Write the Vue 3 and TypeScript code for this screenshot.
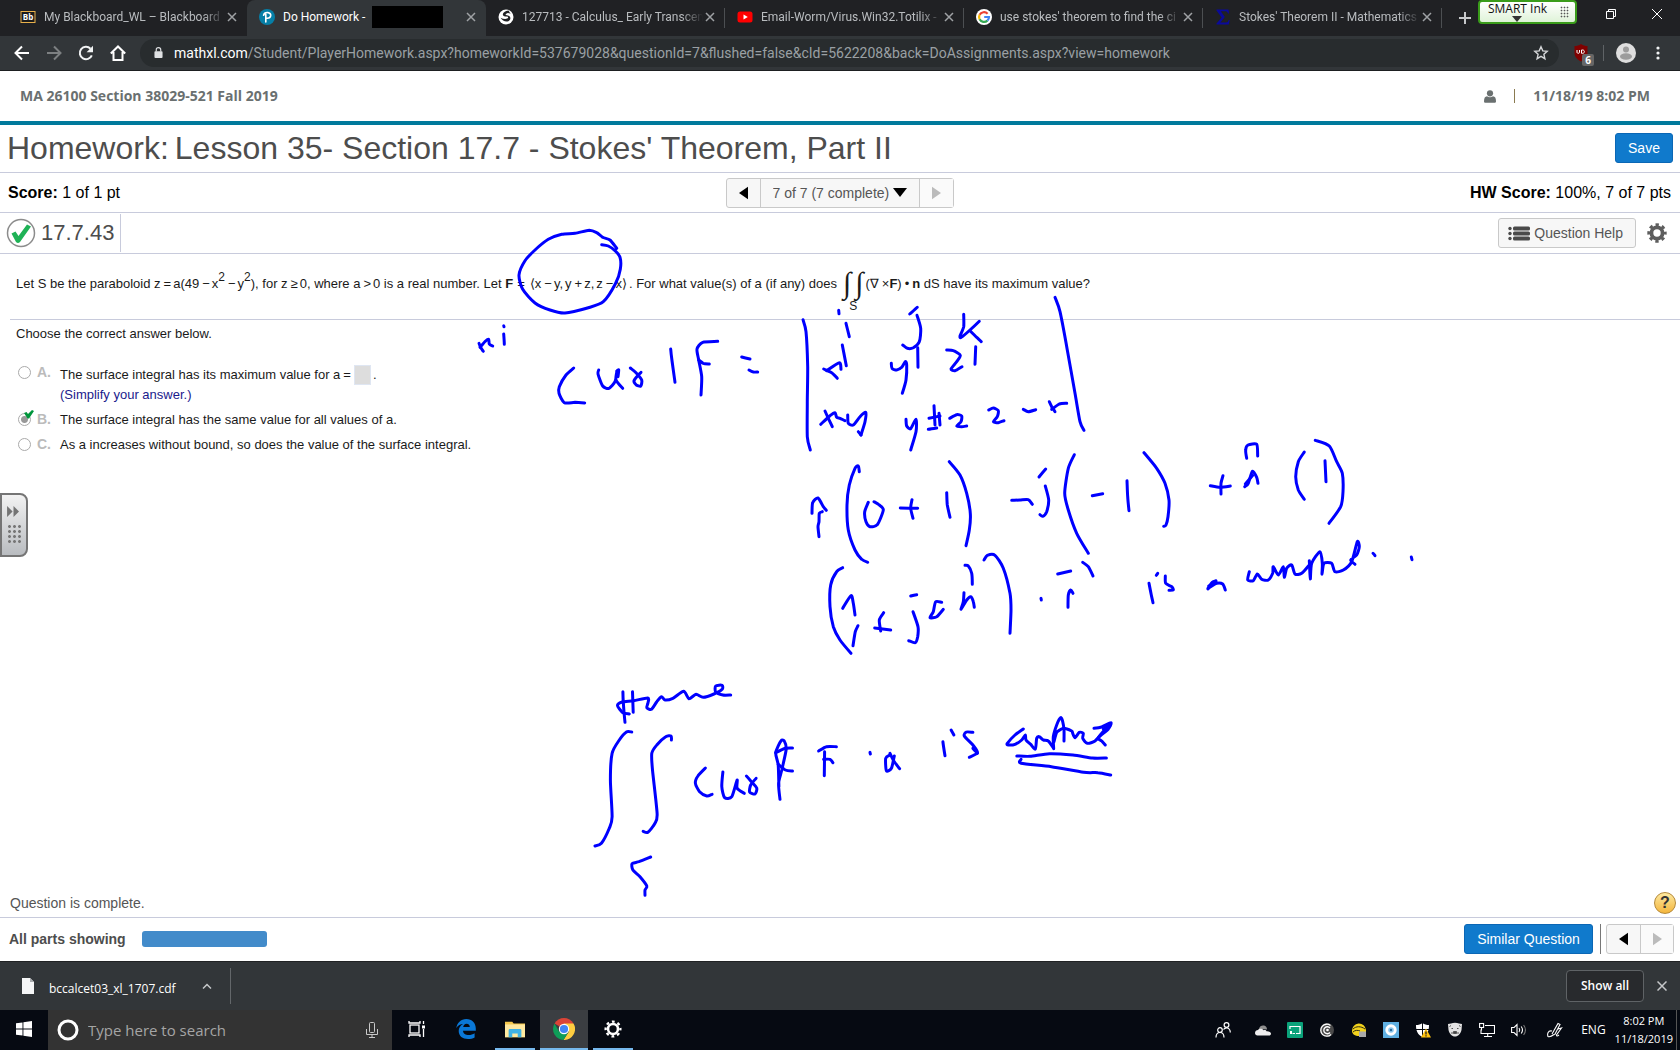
<script setup lang="ts">
import { ref } from 'vue'

interface Tab {
  title: string
  icon: 'bb' | 'pearson' | 'globe' | 'youtube' | 'google' | 'sigma'
  active?: boolean
}

const tabs: Tab[] = [
  { title: 'My Blackboard_WL – Blackboard', icon: 'bb' },
  { title: 'Do Homework - ', icon: 'pearson', active: true },
  { title: '127713 - Calculus_ Early Transcen', icon: 'globe' },
  { title: 'Email-Worm/Virus.Win32.Totilix -', icon: 'youtube' },
  { title: "use stokes' theorem to find the ci", icon: 'google' },
  { title: "Stokes' Theorem II - Mathematics", icon: 'sigma' },
]

const search = ref('')
const answer = ref('B')
const blank = ref('')

/* Pen strokes, grouped by the region of the page where they were made. */
interface InkGroup {
  x: number
  y: number
  sx: number
  sy: number
  strokes: string[]
}

const ink: InkGroup[] = [
  {
    x: 460, y: 210, sx: 3, sy: 3,
    strokes: [
      '425,104 445,108 465,122 480,142 481,178 466,222 430,275 385,293 315,309 270,300 225,279 188,238 177,195 195,152 225,120 265,88 305,73 345,70 388,61 410,68 428,82 450,90 470,115',
      '57,400 62,412 70,424', '60,412 76,394 86,388 88,402 98,408', '131,347 132,350', '131,372 133,403',
      '341,474 318,495 298,530 297,550 313,578 345,577 374,579',
      '416,480 414,492 428,528 447,535 465,515 471,483 468,510 488,535', '471,483 476,480 474,500',
      '511,474 528,488 545,510 542,528 528,524 522,512 535,495 543,487',
      '632,417 635,445 645,517',
      '773,394 728,397 711,417 716,450 725,500 723,555', '716,450 730,460 748,462',
      '845,441 870,447', '867,480 880,486 893,486',
    ],
  },
  {
    x: 780, y: 250, sx: 3, sy: 3,
    strokes: [
      '69,209 78,245 83,350 82,450 82,560 91,600',
      '825,142 840,185 862,300 885,430 900,515 912,541',
      '176,181 177,191', '198,220 208,260', '389,192 412,172', '411,196 422,235 418,275 400,293 382,295 368,285',
      '551,193 551,230 540,258 544,262 570,240 598,214', '570,242 590,262 604,275',
      '131,357 155,368 172,385', '140,362 178,338 183,358', '187,285 199,347',
      '334,340 336,355 350,360 365,352 376,335 380,345 378,390 367,430', '413,293 414,352',
      '500,300 520,302 541,316 530,335 513,357 525,362 546,350', '587,290 585,343',
      '135,483 145,505 157,530', '122,523 150,497 165,488 170,502 180,505 195,512',
      '203,495 205,520 220,525 240,500 257,487 255,515 243,555', '235,545 243,555',
      '378,508 380,528 392,536 408,508 408,545 392,600',
      '462,467 465,525', '447,505 480,498', '477,490 480,525', '445,538 470,534',
      '509,505 530,494 545,498 543,515 530,528 545,530 560,528',
      '626,480 640,474 655,482 652,500 640,515 655,518 672,512',
      '730,478 745,485 767,479', '808,455 815,470 825,485', '815,478 838,462 860,460',
    ],
  },
  {
    x: 790, y: 430, sx: 3, sy: 3,
    strokes: [
      '66,250 68,218 84,204 100,230 109,241', '97,245 88,250 87,275 84,290 87,320',
      '208,125 205,108 195,115 178,165 171,225 175,300 195,360 215,388 233,397',
      '235,217 224,245 228,275 240,290 262,284 280,240 268,225 252,215',
      '331,234 383,235', '366,209 362,235 369,265', '470,188 472,225 480,262',
      '478,95 510,135 530,190 541,250 538,300 528,347',
      '665,211 690,210 715,209 727,223', '747,141 767,117', '766,168 776,210 770,245 758,259 750,254',
      '853,74 835,115 824,190 835,240 860,310 895,370', '907,197 938,191',
      '158,413 140,425 122,465 120,530 130,590 150,630 183,670',
      '158,535 183,497 190,520 195,555', '204,587 196,605 189,647',
      '281,548 268,570 272,603', '254,594 302,600', '362,498 380,494', '369,545 384,590 383,620 376,638 356,632',
      '455,517 437,515 430,545 420,563 440,560 460,538',
      '525,406 535,408 545,430 547,463', '522,488 520,515 513,538 530,510 542,500 550,515 553,532',
      '582,390 592,376 615,376 640,415 660,490 663,540 660,610',
      '753,505 754,510', '803,432 842,423', '878,397 895,410 909,438', '834,532 835,495 842,480 849,490',
    ],
  },
  {
    x: 1120, y: 430, sx: 3, sy: 3,
    strokes: [
      '21,152 23,200 27,242', '72,68 110,115 135,160 147,210 144,260 138,285 131,289',
      '271,167 300,172 331,168', '309,137 303,160 303,192', '380,85 377,60 384,45 410,43 413,78',
      '374,170 385,160 397,124 410,142 414,160', '376,162 398,136', '553,66 535,95 527,140 535,180 553,208', '615,92 618,155',
      '586,31 628,48 650,95 667,130 669,185 662,230 627,280',
      '109,436 113,430', '87,460 94,495 99,518', '136,438 137,460 155,470 160,480 147,481',
      '264,477 275,458 288,452', '264,475 290,460 308,462 316,480', '266,468 288,456',
      '388,425 383,450 400,452 412,432 425,448 445,450 458,430 460,410 475,435 490,410 493,442 500,415 515,405 525,432 545,430 568,405',
      '568,392 571,447 575,400 600,365 607,400 606,433 612,400 635,400 645,425 670,420 695,395 712,335 718,350 710,375 692,390 705,403',
      '759,370 765,377', '874,381 876,389',
    ],
  },
  {
    x: 580, y: 670, sx: 2.8, sy: 3,
    strokes: [
      '120,65 122,110 126,157', '147,65 149,127',
      '138,132 120,128 105,107 118,96 150,92 190,84 190,100 187,113 200,118 215,95 228,80 238,90 260,85 290,64 305,86 325,73 345,82 375,72 398,58 398,46 380,48 380,66 400,75 422,75',
      '145,186 130,186 110,210 90,250 85,330 90,440 82,475 60,520 42,528',
      '256,210 255,198 240,200 215,225 201,250 203,300 216,430 210,460 190,487 177,484',
      '198,561 165,575 146,581 148,600 168,620 187,648 182,660 182,676',
      '351,294 330,318 323,340 335,365 355,378 370,373', '400,306 397,350 405,383 425,380 440,330 440,355 460,370',
      '466,318 480,335 495,355 490,372 475,366 478,345 493,325',
      '560,388 556,340 565,300 577,240 573,215 563,212 548,248 555,285 557,350', '548,248 575,235 595,234', '555,283 575,300 595,303',
      '684,317 685,245', '668,243 690,230 718,230', '682,268 700,268 708,278', '812,247 813,252',
      '868,255 856,265 858,302 872,295 880,258', '868,250 880,275 895,296',
      '1016,215 1022,257', '1039,180 1047,195', '1100,187 1082,186 1076,198 1100,225 1113,248 1090,262', '1100,235 1113,250',
      '1223,258 1260,259 1315,251 1380,255 1435,264 1474,264', '1235,268 1235,280 1320,290 1410,307 1450,308 1486,315',
    ],
  },
  {
    x: 1000, y: 705, sx: 3, sy: 3,
    strokes: [
      '70,72 45,90 22,115 25,120 45,118 65,105 76,90 78,105 92,118 106,132 110,100 118,95 130,105 145,108 160,128',
      '161,131 160,95 170,60 182,38 188,50 192,75 192,108',
      '165,85 190,70 215,78 218,85 225,98 238,82 250,85 248,100 262,115 285,108 305,85 330,55',
      '282,70 305,66 333,53 325,72 295,98 305,108 316,120',
      '310,72 330,62', '162,110 170,80',
    ],
  },
]

/* Curve through every sampled point; each control point leans towards its neighbours. */
function strokePath(g: InkGroup, stroke: string): string {
  const p = stroke.split(' ').map((pair) => {
    const [x, y] = pair.split(',').map(Number)
    return [g.x + x / g.sx, g.y + y / g.sy]
  })
  const r = (n: number) => Math.round(n * 10) / 10
  let d = `M${r(p[0][0])} ${r(p[0][1])}`
  for (let i = 0; i < p.length - 1; i++) {
    const a = p[Math.max(i - 1, 0)]
    const b = p[i]
    const c = p[i + 1]
    const e = p[Math.min(i + 2, p.length - 1)]
    d += `C${r(b[0] + (c[0] - a[0]) / 8)} ${r(b[1] + (c[1] - a[1]) / 8)} ${r(c[0] - (e[0] - b[0]) / 8)} ${r(c[1] - (e[1] - b[1]) / 8)} ${r(c[0])} ${r(c[1])}`
  }
  return d
}

const inkPaths: string[] = ink.flatMap((g) => g.strokes.map((s) => strokePath(g, s)))
</script>

<template>
  <div class="screen">
    <header class="tabstrip">
      <div v-for="t in tabs" :key="t.title" class="tab" :class="{ active: t.active }">
        <svg v-if="t.icon === 'bb'" class="fav" viewBox="0 0 16 16"><rect x="1" y="2.5" width="14" height="11" fill="#1b1b1b" stroke="#e8b04a" /><text x="8" y="11" text-anchor="middle" font-size="8" font-weight="700" fill="#fff" font-family="Open Sans, sans-serif">Bb</text></svg>
        <svg v-else-if="t.icon === 'pearson'" class="fav" viewBox="0 0 16 16"><circle cx="8" cy="8" r="8" fill="#067fa7" /><path d="M6.800 13V5.200M4.600 6.200C5 4.600 7 3.400 8.900 3.600c2 .2 3 1.500 2.800 3.100C11.400 8.500 9.500 9.500 7.200 9.200" fill="none" stroke="#fff" stroke-width="1.600" stroke-linecap="round" /></svg>
        <svg v-else-if="t.icon === 'globe'" class="fav" viewBox="0 0 16 16"><circle cx="8" cy="8" r="7.500" fill="#fff" /><path d="M10.500 1.500C7 2 5 3.500 4.800 5.500 4.700 7.500 7 7.500 9 7.600c1.500.1 1.600 1.400.2 2C7.500 10.300 5 10 2.500 8.800 4 11.500 7 12.800 9.500 12.400c2.500-.4 3.400-2.600 2.600-4.400C11.200 6.300 9 6.200 8 6 6.900 5.500 8.400 4.300 10 4c1 0 1.800.3 2.600 1Z" fill="#202124" /></svg>
        <svg v-else-if="t.icon === 'youtube'" class="fav" viewBox="0 0 16 16"><rect x=".5" y="2.500" width="15" height="11" rx="2.500" fill="#f00" /><path d="M6.500 5.500v5L10.800 8z" fill="#fff" /></svg>
        <svg v-else-if="t.icon === 'google'" class="fav" viewBox="0 0 16 16"><circle cx="8" cy="8" r="8" fill="#fff" /><g fill="none" stroke-width="2.200"><path d="M11.600 4.700A5 5 0 0 0 3.600 5.800" stroke="#ea4335" /><path d="M3.600 5.800a5 5 0 0 0 0 4.400" stroke="#fbbc05" /><path d="M3.600 10.200a5 5 0 0 0 7.800 1.400" stroke="#34a853" /><path d="M11.400 11.600A5 5 0 0 0 13 8H8.200" stroke="#4285f4" /></g></svg>
        <svg v-else class="fav" viewBox="0 0 16 16"><path d="M1.500.5h12l.5 4h-1C12.500 2.700 11.500 2.200 10 2.200H5.800L9.800 8 5.400 13.500h5.400c1.600 0 2.400-.8 2.900-2.500h1l-.9 4.500H1.500v-1L6.600 8.400 1.500 1.500z" fill="#0a0a9a" /></svg>
        <span class="tab-title">{{ t.title }}<i v-if="t.active" class="redacted"></i></span>
        <button class="tab-close" aria-label="Close tab"><svg viewBox="0 0 10 10"><path d="M1 1l8 8M9 1l-8 8" /></svg></button>
      </div>
      <button class="new-tab" aria-label="New tab"><svg viewBox="0 0 12 12"><path d="M6 0v12M0 6h12" /></svg></button>
      <div class="window-controls">
        <button aria-label="Restore"><svg viewBox="0 0 10 10"><path d="M.5 2.500h7v7h-7zM2.500 2.500v-2h7v7h-2" /></svg></button>
        <button aria-label="Close"><svg viewBox="0 0 10 10"><path d="M0 0l10 10M10 0L0 10" /></svg></button>
      </div>
      <button class="smart-ink"><span>SMART Ink</span><svg class="smart-arrow" viewBox="0 0 10 6"><path d="M0 0h10L5 6z" fill="#333" /></svg><i class="smart-dots"></i></button>
    </header>

    <nav class="toolbar">
      <button class="nav" aria-label="Back"><svg viewBox="0 0 16 16"><path d="M15 8H2M8 1.500L1.500 8 8 14.500" stroke="#fff" /></svg></button>
      <button class="nav" aria-label="Forward"><svg viewBox="0 0 16 16"><path d="M1 8h13M8 1.500L14.500 8 8 14.500" stroke="#7d8082" /></svg></button>
      <button class="nav" aria-label="Reload"><svg viewBox="0 0 16 16"><path d="M13.800 10.300A6.200 6.200 0 1 1 12.500 3.700" stroke="#f1f3f4" /><path d="M15 .8v6.400H8.600z" fill="#f1f3f4" /></svg></button>
      <button class="nav" aria-label="Home"><svg viewBox="0 0 16 16"><path d="M.8 8.500L8 1.500l7.200 7M3.500 7v8h9V7" stroke="#fff" /></svg></button>
      <div class="omnibox">
        <svg class="lock" viewBox="0 0 10 13"><rect x=".5" y="5" width="9" height="7.500" rx="1" fill="#dfe1e3" /><path d="M2.500 5.500V3.500a2.500 2.500 0 0 1 5 0v2" fill="none" stroke="#dfe1e3" stroke-width="1.300" /></svg>
        <div class="url"><b>mathxl.com</b>/Student/PlayerHomework.aspx?homeworkId=537679028&amp;questionId=7&amp;flushed=false&amp;cId=5622208&amp;back=DoAssignments.aspx?view=homework</div>
        <svg class="star" viewBox="0 0 16 16"><path d="M8 1.800l1.800 4.100 4.400.4-3.300 3 1 4.400L8 11.400l-3.900 2.300 1-4.400-3.300-3 4.400-.4z" fill="none" stroke="#d5d7d9" stroke-width="1.400" /></svg>
      </div>
      <span class="ublock"><svg viewBox="0 0 16 18"><path d="M8 0c2 1.500 4 2 6.500 2v7c0 4-3 6.500-6.500 8.500C4.500 15.500 1.500 13 1.500 9V2C4 2 6 1.500 8 0z" fill="#800000" /><path d="M4 6v2.500c0 1 2.500 1 2.500 0V6M8.500 9.300V6h1.200c2.200 0 2.200 3.300 0 3.300z" fill="none" stroke="#fff" /></svg><b>6</b></span>
      <i class="tool-sep"></i>
      <svg class="avatar" viewBox="0 0 20 20"><circle cx="10" cy="10" r="10" fill="#dedede" /><circle cx="10" cy="6.500" r="3" fill="#9c9c9c" /><ellipse cx="10" cy="13.500" rx="6" ry="3.200" fill="#9c9c9c" /></svg>
      <svg class="kebab" viewBox="0 0 4 16"><circle cx="2" cy="3" r="1.600" /><circle cx="2" cy="8" r="1.600" /><circle cx="2" cy="13" r="1.600" /></svg>
    </nav>

    <main class="page">
      <div class="course">
        <strong>MA 26100 Section 38029-521 Fall 2019</strong>
        <div class="course-right">
          <svg class="user" viewBox="0 0 12 13"><circle cx="6" cy="3.300" r="3.100" /><path d="M0 11.500C0 8 1 6.500 3 6.300c2 1.300 4 1.300 6 0 2 .2 3 1.700 3 5.200 0 .8-.7 1.300-1.500 1.300h-9C.7 12.800 0 12.300 0 11.500z" /></svg>
          <i class="course-sep"></i>
          <strong>11/18/19 8:02 PM</strong>
        </div>
      </div>

      <div class="title-row">
        <h1><span>Homework:</span><span>Lesson 35- Section 17.7 - Stokes' Theorem, Part II</span></h1>
        <button class="primary save">Save</button>
      </div>

      <div class="score-row">
        <span><b>Score:</b> 1 of 1 pt</span>
        <div class="pager">
          <button aria-label="Previous question"><svg viewBox="0 0 10 14"><path d="M10 0v14L0 7z" /></svg></button>
          <label class="picker">
            <select aria-label="Question"><option>7 of 7 (7 complete)</option></select>
            <svg viewBox="0 0 14 9"><path d="M0 0h14L7 9z" /></svg>
          </label>
          <button disabled aria-label="Next question"><svg viewBox="0 0 10 14"><path d="M0 0v14l10-7z" /></svg></button>
        </div>
        <span class="hw"><b>HW Score:</b> 100%, 7 of 7 pts</span>
      </div>

      <div class="number-row">
        <div class="number">
          <svg viewBox="0 0 30 30"><circle cx="15" cy="15" r="13.500" fill="#fff" stroke="#8c8c8c" stroke-width="1.500" /><path d="M5.500 15.500l4-2 3 4.500L21 6.500l4 2L14 24q-2 2-4 0z" fill="#1fb256" /></svg>
          <span>17.7.43</span>
        </div>
        <button class="help-btn"><svg viewBox="0 0 22 15"><g fill="#4a4a4a"><circle cx="2" cy="2.500" r="1.700" /><circle cx="2" cy="7.500" r="1.700" /><circle cx="2" cy="12.500" r="1.700" /><rect x="5" y=".5" width="17" height="4" rx="1.500" /><rect x="5" y="5.500" width="17" height="4" rx="1.500" /><rect x="5" y="10.500" width="17" height="4" rx="1.500" /></g></svg>Question Help</button>
        <button class="gear" aria-label="Settings"><svg viewBox="0 0 20 20"><circle cx="10" cy="10" r="5.600" fill="none" stroke="#5e5e5e" stroke-width="3.800" /><circle cx="10" cy="10" r="8.200" fill="none" stroke="#5e5e5e" stroke-width="3" stroke-dasharray="3.300 3.140" stroke-dashoffset="1.700" /></svg></button>
      </div>

      <section class="work">
        <p class="question"><span>Let S be the paraboloid z<i>=</i>a(49<i>−</i>x<sup>2</sup><i>−</i>y<sup>2</sup>), for z<i>≥</i>0, where a<i>&gt;</i>0 is a real number. Let <b>F</b><i class="wide">=</i>⟨x<i>−</i>y,<u>y</u><i>+</i>z,<u>z</u><i>−</i>x⟩<u>.</u> For what value(s) of a (if any) does</span><span class="integral"><span class="signs"><em>∫</em><em>∫</em></span><small>S</small></span><span>(∇<i class="cross">×</i><b>F</b>)<i class="dot">•</i><b>n</b> dS have its maximum value?</span></p>

        <div class="answers">
          <p>Choose the correct answer below.</p>
          <div class="option first">
            <input id="opt-a" v-model="answer" type="radio" name="ans" value="A" disabled />
            <label for="opt-a"><b>A.</b></label>
            <div>
              <label class="line" for="blank">The surface integral has its maximum value for a<i>=</i><input id="blank" v-model="blank" class="blank" type="text" disabled />.</label>
              <div class="hint">(Simplify your answer.)</div>
            </div>
          </div>
          <div class="option">
            <span class="checked"><input id="opt-b" v-model="answer" type="radio" name="ans" value="B" disabled /><svg viewBox="0 0 10 9"><path d="M0 3l2.500-1L4 4 8 0l2 1-5 7.500H3.500z" fill="#00953b" /></svg></span>
            <label for="opt-b"><b>B.</b>The surface integral has the same value for all values of a.</label>
          </div>
          <div class="option">
            <input id="opt-c" v-model="answer" type="radio" name="ans" value="C" disabled />
            <label for="opt-c"><b>C.</b>As a increases without bound, so does the value of the surface integral.</label>
          </div>
        </div>
      </section>

      <div class="status">
        <span>Question is complete.</span>
        <button class="ball" aria-label="Help">?</button>
      </div>

      <footer class="footer">
        <span id="parts-label">All parts showing</span>
        <div class="parts" role="progressbar" aria-labelledby="parts-label" aria-valuenow="100"></div>
        <button class="primary similar">Similar Question</button>
        <i class="foot-sep"></i>
        <div class="pager">
          <button aria-label="Previous"><svg viewBox="0 0 10 14"><path d="M10 0v14L0 7z" /></svg></button>
          <button disabled aria-label="Next"><svg viewBox="0 0 10 14"><path d="M0 0v14l10-7z" /></svg></button>
        </div>
      </footer>
    </main>

    <div class="downloads">
      <svg class="file" viewBox="0 0 12 16"><path d="M0 0h8l4 4v12H0z" fill="#f5f6f7" /><path d="M8 0v4h4z" fill="#a9acaf" /></svg>
      <span class="file-name">bccalcet03_xl_1707.cdf</span>
      <button class="chev" aria-label="More"><svg viewBox="0 0 10 6"><path d="M1 5.500l4-4 4 4" /></svg></button>
      <i class="dl-sep"></i>
      <button class="show-all">Show all</button>
      <button class="dl-close" aria-label="Close"><svg viewBox="0 0 10 10"><path d="M.5.500l9 9M9.500.500l-9 9" /></svg></button>
    </div>

    <div class="taskbar">
      <button class="app" aria-label="Start"><svg class="i16" viewBox="0 0 16 16"><path d="M0 2.300L6.500 1.400v6H0zM7.400 1.300L16 0v7.400H7.400zM0 8.400h6.500v6.200L0 13.700zM7.400 8.400H16V16l-8.600-1.300z" fill="#fff" /></svg></button>
      <div class="search">
        <svg viewBox="0 0 22 22"><circle cx="11" cy="11" r="9" fill="none" stroke="#fff" stroke-width="3" /></svg>
        <input v-model="search" type="text" placeholder="Type here to search" aria-label="Search" />
        <svg class="mic" viewBox="0 0 12 16"><rect x="3.500" y=".5" width="5" height="10" rx="1" /><path d="M.5 7v5.500h11V7M6 12.500v3M3 15.500h6" /></svg>
      </div>
      <button class="app" aria-label="Task view"><svg class="i18" viewBox="0 0 18 18"><g fill="none" stroke="#fff" stroke-width="1.300"><rect x="2" y="5" width="9" height="8" /><path d="M1 1v2h11V1M1 17v-2h11v2M15.500 1v3M15.500 9v8" /></g><rect x="14" y="5.500" width="3" height="3" fill="#fff" /></svg></button>
      <button class="app" aria-label="Edge"><svg class="i20" viewBox="0 0 20 20"><path d="M.3 9C1 4 4.800 0 10.300 0 16 0 19.800 4 19.800 9.500v2.300H7c.2 3 2.800 4.200 5.600 4.200 2.300 0 4.300-.7 6-1.800v4.200C16.800 19.500 14.500 20 12 20c-5.500 0-9.300-3-9.300-8 0-3 1.600-5.500 4.300-7C4.500 5 2 6.200.3 9zM7.200 8h6.600c0-2-1.100-3.300-3.200-3.300C8.700 4.700 7.500 6.200 7.200 8z" fill="#0a78d7" /></svg></button>
      <button class="app running" aria-label="File Explorer"><svg class="i20" viewBox="0 0 22 18"><path d="M0 1h8l1.500 2H22v15H0z" fill="#f6c94c" /><path d="M0 4h22v14H0z" fill="#ffe9a0" /><path d="M4 18v-7.500q0-1.500 1.500-1.500h11q1.500 0 1.500 1.500V18h-4v-4H8v4z" fill="#3fb2e5" /></svg></button>
      <button class="app current" aria-label="Chrome"><svg class="i22" viewBox="0 0 22 22"><path d="M11 11L1.500 5.500A11 11 0 0 1 20.500 5.500z" fill="#db4437" /><path d="M20.500 5.500A11 11 0 0 1 10.500 22l5.300-8.300L11 5.500z" fill="#ffcd40" /><path d="M1.500 5.500A11 11 0 0 0 10.500 22l5-8.300-9.300 0z" fill="#0f9d58" /><circle cx="11" cy="11" r="5.200" fill="#fff" /><circle cx="11" cy="11" r="4.100" fill="#4285f4" /></svg></button>
      <button class="app running" aria-label="Settings"><svg class="i18" viewBox="0 0 20 20"><circle cx="10" cy="10" r="5.500" fill="none" stroke="#fff" stroke-width="2.800" /><circle cx="10" cy="10" r="8.200" fill="none" stroke="#fff" stroke-width="2.600" stroke-dasharray="3.100 3.340" stroke-dashoffset="1.500" /></svg></button>
      <div class="tray">
        <svg viewBox="0 0 16 16"><g fill="none" stroke="#fff" stroke-width="1.200"><circle cx="5" cy="8" r="2.300" /><path d="M1 15.500c0-3.500 2-5 4-5s4 1.500 4 5" /><circle cx="11.500" cy="3" r="2.400" /><path d="M8.500 7.500c1.500-2 4.500-2.500 6 0 .6.900.8 2 .8 3" /></g></svg>
        <svg viewBox="0 0 16 16"><path d="M4 7c.5-3 3-4 5-3.500 2 .4 3 2 3 4z" fill="#8f8f8f" /><path d="M0 11c0-2 1.500-3 3-3 .8-1.500 4-2 5.500.3 1-.8 2.700-.4 3 .9C14 9 16 10 16 11.500 16 13 15 13.500 14 13.500H2.500C1 13.500 0 12.500 0 11z" fill="#eee" /></svg>
        <svg viewBox="0 0 16 16"><rect width="16" height="16" rx="1" fill="#0aa27a" /><path d="M3 7V4.500h10v7H9" fill="none" stroke="#fff" stroke-width="1.200" /><path d="M3 9h2v3H3zM5.500 11H8v1H5.500z" fill="#fff" /></svg>
        <svg viewBox="0 0 16 16"><circle cx="8" cy="8" r="7" fill="#4b4b4b" /><path d="M11.500 3.500A6 6 0 1 0 12 12.500M11 6A3.500 3.500 0 1 0 11 10.500" fill="none" stroke="#fff" stroke-width="1.300" /><circle cx="8.500" cy="8" r="1.300" fill="#fff" /></svg>
        <svg viewBox="0 0 16 16"><path d="M1 9a7 7 0 0 1 14-1v3H8v3C4 14 1 12 1 9z" fill="#f2d21c" /><path d="M2 7c3-3 8-3 12 0M2 10c2-2 5-2 7-1" fill="none" stroke="#2c2a12" /><path d="M8 9.500h7V15H8z" fill="#aaa" /></svg>
        <svg viewBox="0 0 16 16"><rect width="16" height="16" fill="#5fb0e2" /><circle cx="8" cy="8" r="5.700" fill="#fff" /><circle cx="8" cy="8" r="2.800" fill="#8ec9ed" /><circle cx="8" cy="8" r="1.200" fill="#2c6da0" /></svg>
        <svg viewBox="0 0 16 16"><path d="M7.500 1C9.500 2.500 11.500 3 14 3c0 6-1.500 9.500-6.500 12C2.500 12.500 1 9 1 3c2.500 0 4.500-.5 6.500-2z" fill="#fff" /><path d="M7.500 1v14M1 7.500h13" stroke="#070a10" /><path d="M11 6.500l5 9H6z" fill="#ffc20e" /><path d="M11 9.500v3M11 13.300v1.300" stroke="#222" stroke-width="1.300" /></svg>
        <svg viewBox="0 0 16 16"><path d="M1 2l3-.5C6.500.5 9.500.5 12 1.500l3 .5-.5 6c-1 4-3.500 6.500-6.500 6.500S2.500 12 1.500 8z" fill="#e3e3e3" /><path d="M4.500 6.500h1.500M10 6.500h1.500M6.500 9.500h3v2h-3zM4 3.500l-1.500 1M12 3.500l1.500 1M5 12v-2M11 12v-2" stroke="#555" fill="#444" /></svg>
        <svg viewBox="0 0 16 16"><g fill="none" stroke="#fff" stroke-width="1.100"><path d="M6 3.500h9.500v8H2V7.500M8.700 11.500v3M5 14.500h8" /><rect x=".6" y="1.500" width="4" height="4" /><path d="M2.500 5.500v3" /></g></svg>
        <svg viewBox="0 0 16 16"><g fill="none" stroke="#fff" stroke-width="1.100"><path d="M.6 5.500h2.500L6 2.500v11l-3-3H.6zM8 6q1.500 2 0 4M10.200 4.500q2.600 3.500 0 7" /><path d="M12.600 3q3.700 5 0 10" stroke="#777" /></g></svg>
        <svg viewBox="0 0 16 16"><g fill="none" stroke="#fff" stroke-width="1.100"><path d="M5 12L11 1.500l2 1L7.500 13M11 7l3.500-1-5 7q0 2 2.500 0M5 9C1 8 0 12 1 14.500q2 1 6-2" /></g></svg>
        <span class="lang">ENG</span>
        <div class="clock"><span>8:02 PM</span><span>11/18/2019</span></div>
        <i class="peek"></i>
      </div>
    </div>

    <button class="handle" aria-label="Open toolbar"><svg viewBox="0 0 14 12"><path d="M0 0l6 6-6 6zM7 0l6 6-6 6z" fill="#747474" /></svg><i></i></button>

    <svg class="ink" width="1" height="1" aria-hidden="true"><path v-for="(d, i) in inkPaths" :key="i" :d="d" /></svg>
  </div>
</template>

<style>
body {
  margin: 0;
  background: #fff;
}
</style>

<style scoped>
.screen {
  position: relative;
  display: flex;
  flex-direction: column;
  min-height: 100vh;
  overflow: hidden;
  font-family: "Liberation Sans", Arial, sans-serif;
  color: #000;
}
.screen * { box-sizing: border-box; }
button { font: inherit; border: 0; padding: 0; background: none; color: inherit; }
i { font-style: normal; }
svg { flex: none; display: block; }

.tabstrip {
  position: relative;
  display: flex;
  height: 36px;
  padding-left: 8px;
  background: #202124;
  font: 12px/16px Roboto, sans-serif;
  color: #b9bcbf;
}
.tab {
  display: flex;
  align-items: center;
  flex: 0 1 239px;
  min-width: 0;
  height: 36px;
  padding: 0 10px 2px 12px;
}
.tab.active { background: #323639; border-radius: 8px 8px 0 0; color: #fff; }
.tab:nth-child(n + 3) { background: linear-gradient(#4c4f52, #4c4f52) right 0 top 8px / 1px 20px no-repeat; }
.fav { width: 16px; height: 16px; margin-right: 8px; }
.tab-title {
  flex: 1;
  display: flex;
  align-items: center;
  overflow: hidden;
  white-space: pre;
  height: 24px;
  -webkit-mask-image: linear-gradient(90deg, #000 88%, transparent);
  mask-image: linear-gradient(90deg, #000 88%, transparent);
}
.tab.active .tab-title { -webkit-mask-image: none; mask-image: none; }
.redacted { width: 71px; height: 22px; margin-left: 4px; background: #000; }
.tab-close { width: 10px; height: 10px; margin-left: 2px; }
.tab-close svg { width: 10px; height: 10px; stroke: #9fa2a5; stroke-width: 1.5; }
.new-tab { width: 12px; margin-left: 17px; }
.new-tab svg { width: 12px; height: 12px; stroke: #c6c8ca; stroke-width: 2; }
.window-controls { display: flex; margin-left: auto; height: 28px; }
.window-controls button { width: 46px; display: grid; place-items: center; }
.window-controls svg { width: 10px; height: 10px; fill: none; stroke: #fff; }
.smart-ink {
  position: absolute;
  top: 0;
  right: 103px;
  width: 99px;
  height: 24px;
  border: 2px solid #3a9c1a;
  border-radius: 4px;
  background: linear-gradient(#fff, #dff3d8);
  color: #111;
  font-family: "Open Sans", sans-serif;
  text-align: left;
  padding-left: 8px;
}
.smart-ink span { display: block; line-height: 14px; }
.smart-arrow { width: 10px; height: 6px; margin-left: 24px; }
.smart-dots {
  position: absolute;
  right: 6px;
  top: 4px;
  width: 9px;
  height: 12px;
  background: radial-gradient(#555 40%, transparent 50%) 0 0 / 3px 3px;
}

.toolbar {
  display: flex;
  align-items: center;
  height: 35px;
  padding-left: 14px;
  padding-right: 20px;
  background: #323639;
  border-bottom: 1px solid #1d1f21;
}
.nav { width: 16px; height: 16px; margin-right: 16px; }
.nav svg { width: 16px; height: 16px; fill: none; stroke-width: 2; }
.omnibox {
  flex: 1;
  min-width: 0;
  display: flex;
  align-items: center;
  height: 28px;
  margin-left: -2px;
  padding: 0 10px 1px 14px;
  border-radius: 14px;
  background: #282c2e;
  font: 14px/20px Roboto, sans-serif;
  color: #9aa0a4;
}
.lock { width: 9px; height: 13px; margin-right: 11px; }
.url { flex: 1; overflow: hidden; white-space: nowrap; }
.url b { color: #fff; font-weight: 400; }
.star { width: 16px; height: 16px; }
.ublock { position: relative; width: 16px; height: 18px; margin-left: 14px; }
.ublock svg { width: 16px; height: 18px; }
.ublock b {
  position: absolute;
  left: 9px;
  top: 10px;
  width: 12px;
  height: 12px;
  border-radius: 2px;
  background: #666;
  color: #fff;
  font: 700 10px/12px "Open Sans", sans-serif;
  text-align: center;
}
.tool-sep { width: 1px; height: 16px; margin: 0 12px 0 14px; background: #5f6366; }
.avatar { width: 20px; height: 20px; }
.kebab { width: 4px; height: 16px; margin-left: 20px; fill: #f1f3f4; }

.page { flex: 1; display: flex; flex-direction: column; }
.course {
  display: flex;
  justify-content: space-between;
  align-items: center;
  height: 54px;
  padding: 0 30px 0 20px;
  border-bottom: 4px solid #007a9c;
  font: 14px/20px "Open Sans", sans-serif;
  color: #6a7070;
}
.course strong { font-weight: 700; }
.course-right { display: flex; align-items: center; }
.user { width: 12px; height: 13px; fill: #6a7070; }
.course-sep { width: 1px; height: 14px; margin: 0 18px; background: #8a7a50; }
.title-row {
  display: flex;
  justify-content: space-between;
  align-items: center;
  height: 48px;
  padding: 0 7px 2px 7px;
  border-bottom: 1px solid #c8cbdc;
}
h1 { display: flex; gap: 6px; margin: 0; font-size: 32px; line-height: 40px; font-weight: 400; color: #4d4d4d; white-space: nowrap; }
.primary {
  height: 30px;
  border: 1px solid #0b67b5;
  border-radius: 3px;
  background: #107acc;
  color: #fff;
  font-size: 14px;
  font-weight: 400;
}
.save { width: 58px; }
.score-row {
  display: grid;
  grid-template-columns: 1fr auto 1fr;
  align-items: center;
  height: 40px;
  padding: 0 9px 0 8px;
  border-bottom: 1px solid #c8cbdc;
  font-size: 16px;
}
.hw { text-align: right; }
.pager { display: flex; height: 30px; border: 1px solid #c9c9c9; border-radius: 3px; background: #f7f7f7; font-size: 14px; }
.pager button { width: 33px; display: grid; place-items: center; }
.pager button svg { width: 9px; height: 14px; }
.pager button:disabled { background: #fafafa; fill: #bbb; }
.pager button + button { border-left: 1px solid #c9c9c9; }
.picker { display: flex; align-items: center; width: 160px; padding: 0 12px; border: 1px solid #c9c9c9; border-width: 0 1px; }
.picker select { appearance: none; border: 0; padding: 0; background: none; font: inherit; color: #555; flex: 1; min-width: 0; white-space: nowrap; }
.picker svg { width: 14px; height: 9px; }
.number-row {
  display: flex;
  align-items: center;
  height: 41px;
  padding-right: 13px;
  border-bottom: 1px solid #c8cbdc;
}
.number {
  display: flex;
  align-items: center;
  width: 121px;
  height: 38px;
  padding-left: 6px;
  border-right: 1px solid #c8cbdc;
  font-size: 22px;
  color: #4d4d4d;
}
.number svg { width: 30px; height: 30px; margin-right: 5px; }
.help-btn {
  display: flex;
  align-items: center;
  gap: 4px;
  height: 30px;
  margin-left: auto;
  padding: 0 12px 0 9px;
  border: 1px solid #c9c9c9;
  border-radius: 3px;
  background: #f7f7f7;
  color: #555;
  font-size: 14px;
}
.help-btn svg { width: 22px; height: 15px; }
.gear { margin-left: 11px; }
.gear svg { width: 20px; height: 20px; }

.work { flex: 1; font-size: 13px; line-height: 16px; color: #1a1a1a; }
.work i { margin: 0 2px 0 3px; }
.work .wide { margin: 0 5px 0 4px; }
.work .cross { margin: 0 0 0 3px; }
.work .dot { margin: 0 3px; }
.work u { text-decoration: none; margin-left: 2px; }
.question {
  display: flex;
  align-items: center;
  height: 66px;
  margin: 0 0 0 10px;
  padding: 0 0 5px 6px;
  border-bottom: 1px solid #c8cbdc;
  white-space: nowrap;
}
.question sup { font-size: 12px; line-height: 0; vertical-align: 7px; }
.integral { display: flex; flex-direction: column; align-items: center; margin: 12px 2px 0 6px; }
.signs { display: flex; gap: 4px; font: 30px/32px "Liberation Serif", serif; }
.signs em { font-style: normal; }
.integral small { font-size: 12px; line-height: 14px; }
.answers { padding: 6px 0 0 16px; }
.answers p { margin: 0 0 22px; }
.option { display: flex; align-items: center; height: 25px; }
.option.first { align-items: flex-start; height: 43px; }
.option > label b { display: inline-block; width: 23px; font-size: 14px; line-height: 16px; color: #bbb; }
.option input[type="radio"] {
  appearance: none;
  display: block;
  width: 13px;
  height: 13px;
  margin: 0 6px 0 2px;
  border: 1px solid #aaa;
  border-radius: 50%;
  background: #fff;
}
.option.first > input[type="radio"] { margin: 2px 6px 0 2px; }
.option input[type="radio"]:checked { background: radial-gradient(#999 0 3px, #fff 4px); }
.checked { position: relative; }
.checked svg { position: absolute; left: 8px; top: -3px; width: 10px; height: 9px; }
.line { display: flex; align-items: center; height: 22px; }
.blank { width: 17px; height: 20px; padding: 0; margin: 0 2px 0 1px; border: 1px solid #dfe6f2; background: #ddd; }
.hint { line-height: 18px; color: #1a1a8c; }

.status { display: flex; justify-content: space-between; align-items: center; height: 30px; padding: 0 4px 0 10px; border-bottom: 1px solid #c8cbdc; font-size: 14px; color: #555; }
.ball {
  width: 22px;
  height: 22px;
  border: 1px solid #b5893a;
  border-radius: 50%;
  background: linear-gradient(#fde9a0, #f4b63e);
  color: #333;
  font-size: 16px;
  font-weight: 700;
  line-height: 20px;
}
.footer { display: flex; align-items: center; height: 43px; padding: 0 6px 2px 9px; font-size: 14px; color: #4d4d4d; font-weight: 700; }
.parts { width: 125px; height: 16px; margin-left: 16px; border-radius: 3px; background: #428bca; }
.similar { width: 129px; margin-left: auto; }
.foot-sep { width: 1px; height: 30px; margin: 0 5px 0 7px; background: #777; }

.downloads {
  display: flex;
  align-items: center;
  height: 49px;
  padding: 0 13px 0 22px;
  border-top: 1px solid #202224;
  background: #323639;
  color: #fff;
  font: 12px/16px "Open Sans", sans-serif;
}
.file { width: 12px; height: 16px; margin-right: 15px; }
.file-name { padding-top: 5px; }
.chev { margin-left: 26px; }
.chev svg { width: 10px; height: 6px; fill: none; stroke: #c5c7c9; stroke-width: 1.5; }
.dl-sep { width: 1px; height: 36px; margin-left: 18px; background: #63676a; }
.show-all { width: 78px; height: 32px; margin-left: auto; border: 1px solid #5f6366; border-radius: 4px; background: #282a2d; font-weight: 600; }
.dl-close { margin-left: 13px; }
.dl-close svg { width: 10px; height: 10px; stroke: #c5c7c9; stroke-width: 1.5; }

.taskbar { display: flex; height: 40px; background: #060a12; color: #fff; font: 12px/16px "Open Sans", sans-serif; }
.app { width: 48px; display: grid; place-items: center; border-bottom: 2px solid transparent; }
.app + .app, .search + .app { margin-left: 1px; }
.app.running { background: linear-gradient(#76b9ed, #76b9ed) bottom / 40px 2px no-repeat border-box; }
.app.current { background: #3b3e42; border-bottom-color: #76b9ed; }
.i16 { width: 16px; height: 16px; }
.i18 { width: 18px; height: 18px; }
.i20 { width: 20px; height: 20px; }
.i22 { width: 22px; height: 22px; }
.search { display: flex; align-items: center; width: 344px; padding: 0 14px 0 9px; background: #333; }
.search svg { width: 22px; height: 22px; }
.search input { flex: 1; min-width: 0; border: 0; padding: 0; margin-left: 9px; background: none; outline: none; color: #fff; font: 15px/20px "Open Sans", sans-serif; }
.search input::placeholder { color: #a5a5a5; opacity: 1; }
.search .mic { width: 12px; height: 16px; fill: none; stroke: #c9c9c9; }
.tray { display: flex; align-items: center; gap: 16px; margin-left: auto; }
.tray svg { width: 16px; height: 16px; }
.tray svg:first-child { margin-right: 8px; }
.tray svg:last-of-type { margin-left: 4px; }
.lang { margin-left: 2px; }
.clock { display: flex; flex-direction: column; align-items: center; font-size: 11px; line-height: 18px; margin-left: -7px; }
.peek { width: 1px; height: 40px; margin: 0 3px 0 -13px; background: #555; }

.handle {
  position: absolute;
  left: 0;
  top: 493px;
  width: 28px;
  height: 64px;
  border: 2px solid #757575;
  border-radius: 0 8px 8px 0;
  background: linear-gradient(#f2f2f2, #b9bcc0);
  padding: 0 0 0 5px;
}
.handle svg { width: 13px; height: 11px; }
.handle i { display: block; width: 15px; height: 20px; margin-top: 7px; background: radial-gradient(#777 35%, transparent 45%) 0 0 / 5px 5px; }

.ink { position: absolute; left: 0; top: 0; overflow: visible; pointer-events: none; fill: none; stroke: #00f; stroke-width: 3; stroke-linecap: round; stroke-linejoin: round; }
</style>
